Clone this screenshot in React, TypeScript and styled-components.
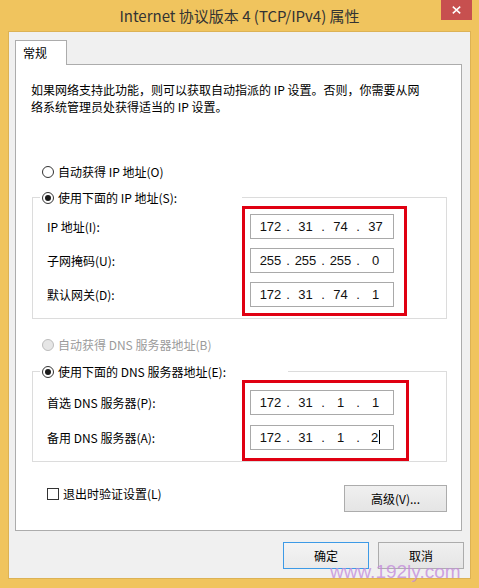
import styled, { createGlobalStyle } from 'styled-components';

const GlobalStyle = createGlobalStyle`
  html, body {
    margin: 0;
    padding: 0;
    background: #ffffff;
  }
  body {
    font-family: "Noto Sans CJK SC", "Microsoft YaHei", sans-serif;
    font-size: 12px;
    color: #000000;
  }
`;

interface Field {
  label: string;
  octets: string[];
}

const ipFields: Field[] = [
  { label: 'IP 地址(I):', octets: ['172', '31', '74', '37'] },
  { label: '子网掩码(U):', octets: ['255', '255', '255', '0'] },
  { label: '默认网关(D):', octets: ['172', '31', '74', '1'] },
];

const dnsFields: Field[] = [
  { label: '首选 DNS 服务器(P):', octets: ['172', '31', '1', '1'] },
  { label: '备用 DNS 服务器(A):', octets: ['172', '31', '1', '2'] },
];

const CloseIcon = () => (
  <svg width="9" height="8" viewBox="0 0 9 8">
    <path d="M0.8 0.6 L8.2 7.4 M8.2 0.6 L0.8 7.4" stroke="#ffffff" strokeWidth="1.5" fill="none" />
  </svg>
);

const IpInput = ({ octets, caret }: { octets: string[]; caret?: boolean }) => (
  <InputBox>
    {octets.map((o, i) => (
      <Octets key={i}>
        <Octet $caret={caret && i === octets.length - 1}>{o}</Octet>
        {i < octets.length - 1 && <Dot>.</Dot>}
      </Octets>
    ))}
  </InputBox>
);

const FieldRows = ({
  fields,
  gap,
  pad,
  caretLast,
}: {
  fields: Field[];
  gap: number;
  pad: [number, number, number, number];
  caretLast?: boolean;
}) => (
  <GroupBody>
    <LabelColumn $gap={gap} $top={pad[0] + 3}>
      {fields.map((f) => (
        <FieldLabel key={f.label}>{f.label}</FieldLabel>
      ))}
    </LabelColumn>
    <Highlight $pad={pad}>
      <InputColumn $gap={gap}>
        {fields.map((f, i) => (
          <IpInput key={f.label} octets={f.octets} caret={caretLast && i === fields.length - 1} />
        ))}
      </InputColumn>
    </Highlight>
  </GroupBody>
);

export default function App() {
  return (
    <>
      <GlobalStyle />
      <Window>
        <TitleBar>
          <span />
          <Title>Internet 协议版本 4 (TCP/IPv4) 属性</Title>
          <CloseButton>
            <CloseIcon />
          </CloseButton>
        </TitleBar>
        <Client>
          <TabStrip>
            <Tab>常规</Tab>
          </TabStrip>
          <Panel>
            <Description>
              如果网络支持此功能，则可以获取自动指派的 IP 设置。否则，你需要从网
              <br />
              络系统管理员处获得适当的 IP 设置。
            </Description>

            <Option $top={48}>
              <Radio />
              自动获得 IP 地址(O)
            </Option>
            <Group $top={9} $bottom={2}>
              <Legend $width={202}>
                <Radio $checked />
                使用下面的 IP 地址(S):
              </Legend>
              <FieldRows fields={ipFields} gap={9} pad={[5, 10, 6, 5]} />
            </Group>

            <Option $top={17} $disabled>
              <Radio $disabled />
              自动获得 DNS 服务器地址(B)
            </Option>
            <Group $top={10} $bottom={0}>
              <Legend $width={248}>
                <Radio $checked />
                使用下面的 DNS 服务器地址(E):
              </Legend>
              <FieldRows fields={dnsFields} gap={10} pad={[7, 12, 8, 5]} caretLast />
            </Group>

            <FooterRow>
              <CheckOption>
                <CheckBox />
                退出时验证设置(L)
              </CheckOption>
              <Button $width={103}>高级(V)...</Button>
            </FooterRow>
          </Panel>
          <ButtonRow>
            <Button $width={86} $default>
              确定
            </Button>
            <Button $width={86}>取消</Button>
          </ButtonRow>
        </Client>
        <Watermark>www.192ly.com</Watermark>
      </Window>
    </>
  );
}

const Window = styled.div`
  position: relative;
  width: 479px;
  height: 588px;
  background: #f0c45e;
  display: flex;
  flex-direction: column;
  overflow: hidden;
`;
const TitleBar = styled.div`
  height: 31px;
  flex-shrink: 0;
  display: grid;
  grid-template-columns: 1fr auto 1fr;
  padding-right: 7px;
  padding-left: 7px;
`;
const Title = styled.div`
  font-size: 15px;
  line-height: 31px;
  color: #333333;
  white-space: nowrap;
`;
const CloseButton = styled.div`
  justify-self: end;
  width: 31px;
  height: 20px;
  background: #c7504f;
  display: flex;
  align-items: center;
  justify-content: center;
`;
const Client = styled.div`
  flex: 1;
  margin: 0 8px 9px 8px;
  border: 1px solid #dcb255;
  background: #f0f0f0;
  padding: 8px 6px 9px 6px;
  display: flex;
  flex-direction: column;
`;
const TabStrip = styled.div`
  display: flex;
`;
const Tab = styled.div`
  position: relative;
  z-index: 1;
  width: 52px;
  height: 25px;
  box-sizing: border-box;
  margin-bottom: -1px;
  padding-left: 7px;
  line-height: 24px;
  background: #ffffff;
  border: 1px solid #acacac;
  border-bottom: none;
`;
const Panel = styled.div`
  flex: 1;
  margin-right: 2px;
  background: #ffffff;
  border: 1px solid #acacac;
  padding: 16px 14px 0 15px;
  display: flex;
  flex-direction: column;
`;
const Description = styled.p`
  margin: 0;
  line-height: 17px;
  white-space: nowrap;
`;
const Option = styled.div<{ $top: number; $disabled?: boolean }>`
  margin-top: ${({ $top }) => $top}px;
  margin-left: 11px;
  height: 17px;
  display: flex;
  align-items: center;
  gap: 4px;
  color: ${({ $disabled }) => ($disabled ? '#9b9b9b' : '#000000')};
`;
const Radio = styled.span<{ $checked?: boolean; $disabled?: boolean }>`
  width: 12px;
  height: 12px;
  box-sizing: border-box;
  flex-shrink: 0;
  border-radius: 50%;
  border: 1px solid ${({ $disabled }) => ($disabled ? '#bcbcbc' : '#333333')};
  background: ${({ $disabled }) => ($disabled ? '#e6e6e6' : '#ffffff')};
  display: flex;
  align-items: center;
  justify-content: center;
  &::after {
    content: '';
    display: ${({ $checked }) => ($checked ? 'block' : 'none')};
    width: 6px;
    height: 6px;
    border-radius: 50%;
    background: #1a1a1a;
  }
`;
const Group = styled.fieldset<{ $top: number; $bottom: number }>`
  margin: ${({ $top }) => $top}px 0 0 1px;
  padding: 0 0 ${({ $bottom }) => $bottom}px 0;
  border: 1px solid #dcdcdc;
  min-width: 0;
`;
const Legend = styled.legend<{ $width: number }>`
  width: ${({ $width }) => $width}px;
  box-sizing: border-box;
  margin-left: 7px;
  padding: 0 0 0 2px;
  height: 17px;
  display: flex;
  align-items: center;
  gap: 4px;
  background: #ffffff;
`;
const GroupBody = styled.div`
  display: flex;
  padding-left: 14px;
`;
const LabelColumn = styled.div<{ $gap: number; $top: number }>`
  width: 195px;
  padding-top: ${({ $top }) => $top}px;
  display: flex;
  flex-direction: column;
  gap: ${({ $gap }) => $gap}px;
`;
const FieldLabel = styled.div`
  height: 25px;
  line-height: 25px;
  white-space: nowrap;
`;
const Highlight = styled.div<{ $pad: [number, number, number, number] }>`
  border: 3px solid #e00012;
  padding: ${({ $pad }) => $pad.map((p) => `${p}px`).join(' ')};
`;
const InputColumn = styled.div<{ $gap: number }>`
  display: flex;
  flex-direction: column;
  gap: ${({ $gap }) => $gap}px;
`;
const InputBox = styled.div`
  width: 144px;
  height: 25px;
  box-sizing: border-box;
  border: 1px solid #a9a9a9;
  background: #ffffff;
  padding-left: 5px;
  display: flex;
  align-items: center;
  font-family: "Liberation Sans", "Noto Sans", sans-serif;
  font-size: 13px;
  color: #111111;
`;
const Octets = styled.div`
  display: flex;
`;
const Octet = styled.span<{ $caret?: boolean }>`
  width: 29px;
  text-align: center;
  &::after {
    content: '';
    display: ${({ $caret }) => ($caret ? 'inline-block' : 'none')};
    width: 1px;
    height: 14px;
    margin-left: 1px;
    vertical-align: -2px;
    background: #000000;
  }
`;
const Dot = styled.span`
  width: 6px;
  text-align: center;
`;
const FooterRow = styled.div`
  margin-top: 23px;
  padding-left: 16px;
  display: flex;
  justify-content: space-between;
  align-items: flex-start;
`;
const CheckOption = styled.div`
  height: 17px;
  display: flex;
  align-items: center;
  gap: 4px;
`;
const CheckBox = styled.span`
  width: 12px;
  height: 12px;
  box-sizing: border-box;
  border: 1px solid #333333;
  background: #ffffff;
`;
const Button = styled.div<{ $width: number; $default?: boolean }>`
  width: ${({ $width }) => $width}px;
  height: 27px;
  box-sizing: border-box;
  border: 1px solid ${({ $default }) => ($default ? '#3d9ae6' : '#acacac')};
  background: ${({ $default }) =>
    $default ? 'linear-gradient(#f4f4f4, #eaeaea)' : 'linear-gradient(#f0f0f0, #e5e5e5)'};
  display: flex;
  align-items: center;
  justify-content: center;
  line-height: 14px;
`;
const ButtonRow = styled.div`
  margin-top: 11px;
  display: flex;
  justify-content: flex-end;
  gap: 9px;
`;
const Watermark = styled.div`
  position: absolute;
  left: 330px;
  top: 565px;
  font-family: "Liberation Sans", Arial, sans-serif;
  font-size: 19px;
  line-height: 14px;
  color: rgba(196, 140, 220, 0.8);
  white-space: nowrap;
  pointer-events: none;
`;
